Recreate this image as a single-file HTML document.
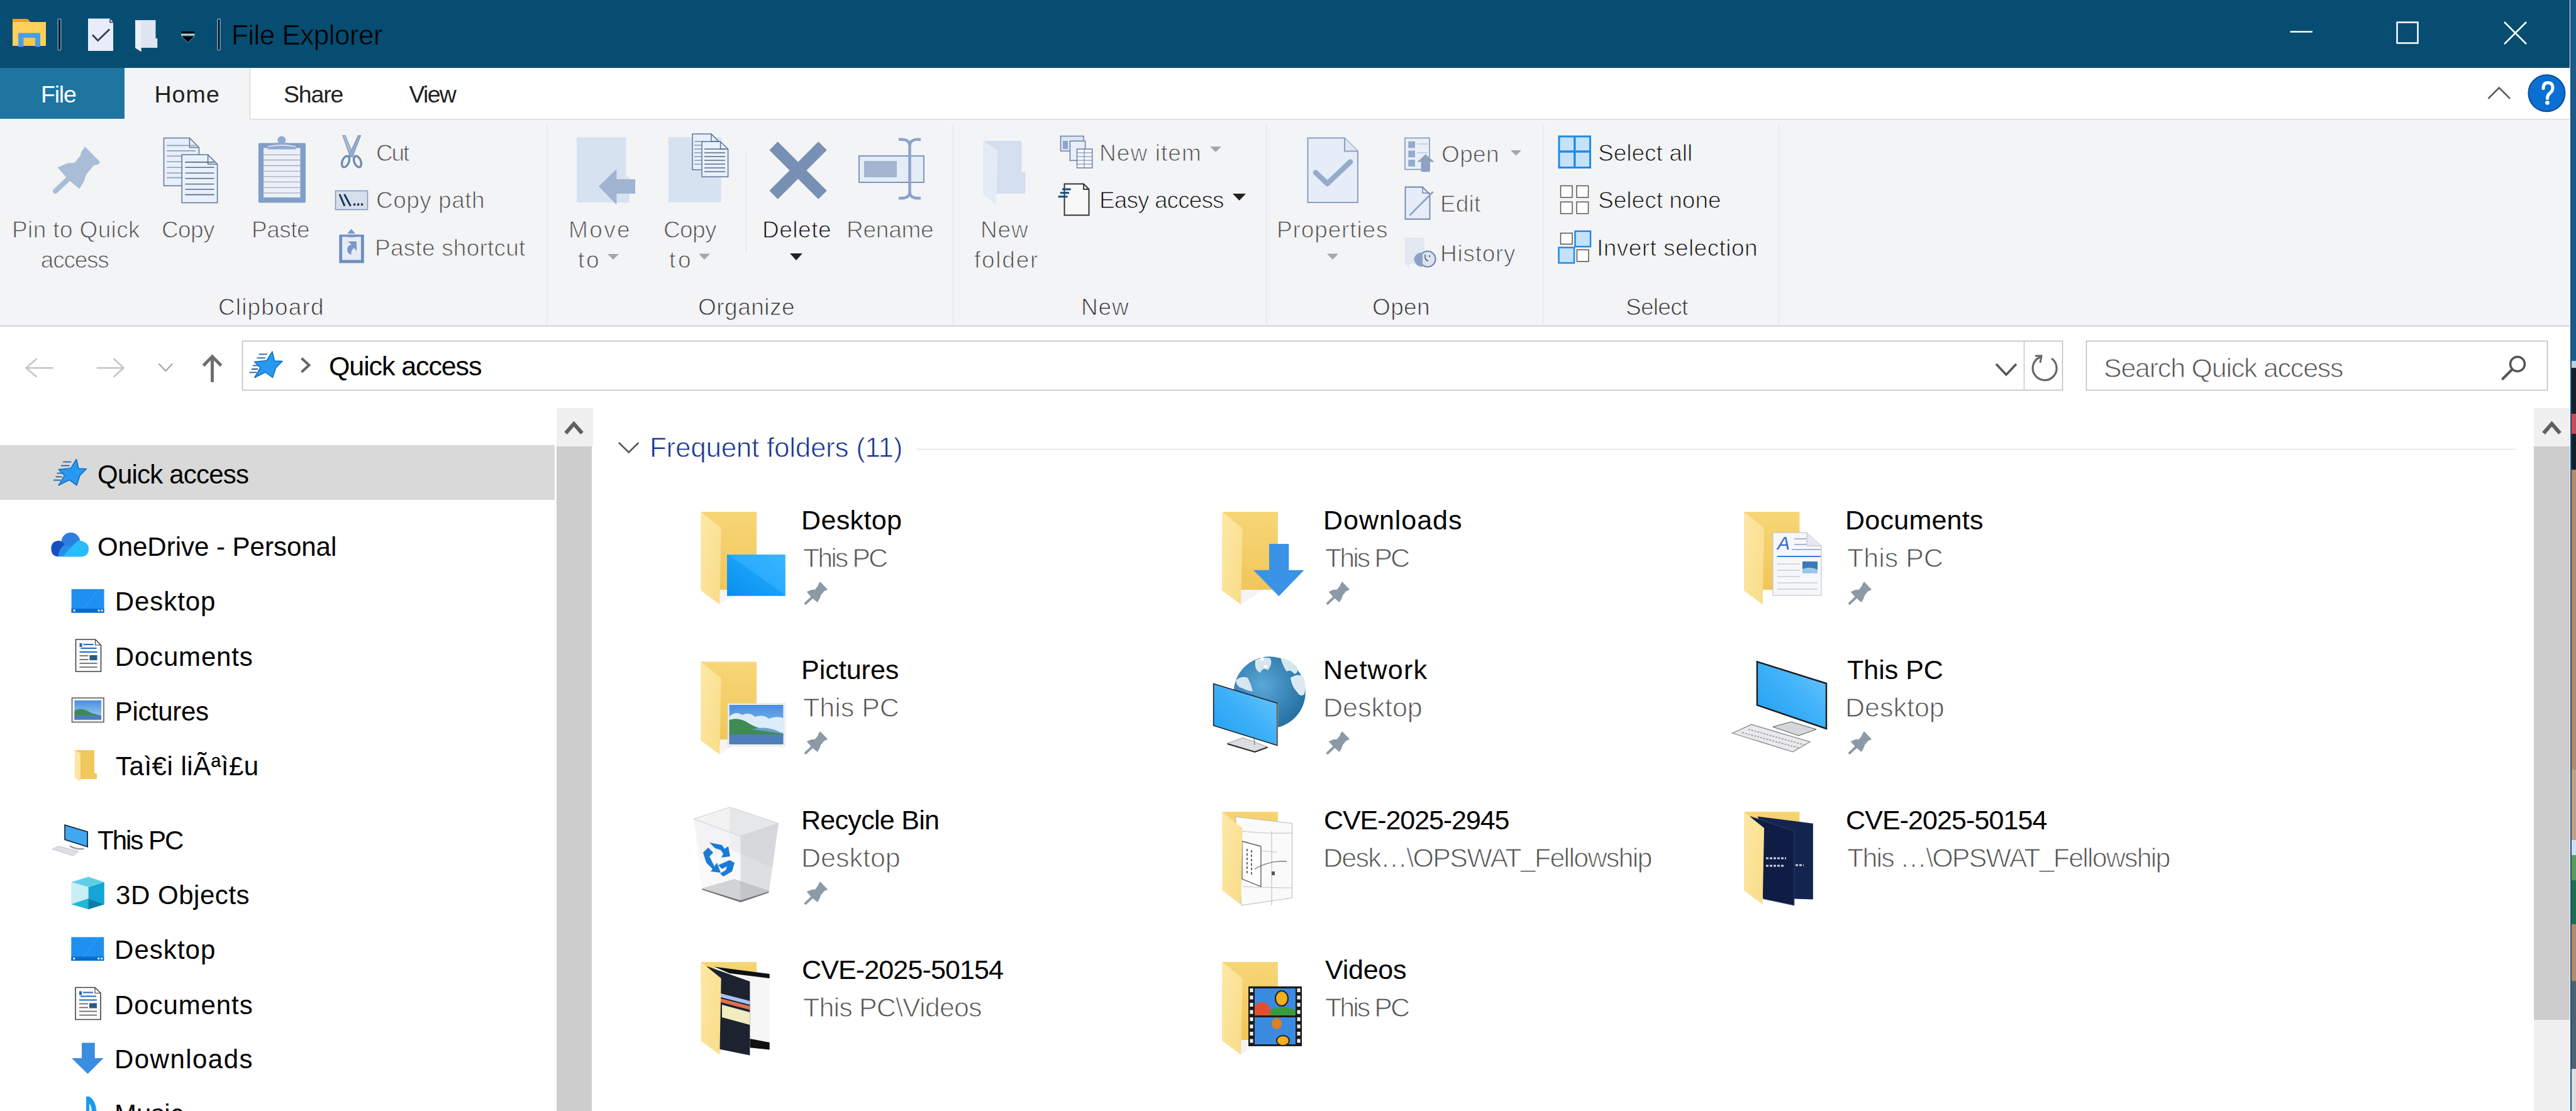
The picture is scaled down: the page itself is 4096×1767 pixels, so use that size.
<!DOCTYPE html>
<html><head><meta charset="utf-8"><title>File Explorer</title>
<style>html,body{margin:0;padding:0;width:4096px;height:1767px;overflow:hidden;background:#fff}text{font-family:"Liberation Sans",sans-serif}</style>
</head><body>
<svg width="4096" height="1767" viewBox="0 0 4096 1767" style="display:block;font-family:&quot;Liberation Sans&quot;, sans-serif"><rect x="0" y="0" width="4096" height="1767" fill="#ffffff" />
<rect x="4087" y="0" width="9" height="1767" fill="#1b2a3a" />
<rect x="4089" y="0" width="7" height="574" fill="#1a5a8c" />
<rect x="4089" y="574" width="7" height="11" fill="#c0d0e0" />
<rect x="4089" y="585" width="7" height="162" fill="#14202e" />
<rect x="4089" y="658" width="7" height="32" fill="#c84a55" />
<rect x="4089" y="747" width="7" height="477" fill="#b48c6a" />
<rect x="4089" y="1224" width="7" height="112" fill="#c0a283" />
<rect x="4089" y="1336" width="7" height="24" fill="#d0e0f0" />
<rect x="4089" y="1360" width="7" height="40" fill="#5a9a5a" />
<rect x="4089" y="1400" width="7" height="70" fill="#1f6e50" />
<rect x="4089" y="1470" width="7" height="90" fill="#b48c6a" />
<rect x="4089" y="1560" width="7" height="140" fill="#4f6072" />
<rect x="4089" y="1700" width="7" height="67" fill="#dcdcdc" />
<rect x="4087" y="0" width="2" height="1767" fill="#1a4f7e" />
<rect x="0" y="0" width="4086" height="108" fill="#064d71" />
<rect x="0" y="108" width="4086" height="82" fill="#ffffff" />
<rect x="0" y="108" width="198" height="81" fill="#1e75a0" />
<rect x="198" y="108" width="199" height="82" fill="#f3f4f6" />
<line x1="397.5" y1="108" x2="397.5" y2="190" stroke="#cfd0d2" stroke-width="1.2" />
<line x1="397" y1="189.5" x2="4086" y2="189.5" stroke="#cfd0d2" stroke-width="1.2" />
<rect x="0" y="190" width="4086" height="328" fill="#f3f4f6" />
<line x1="0" y1="518.5" x2="4086" y2="518.5" stroke="#c6c7c9" stroke-width="1.5" />
<line x1="869.5" y1="198" x2="869.5" y2="517" stroke="#dfe1e4" stroke-width="1" />
<line x1="1515.5" y1="198" x2="1515.5" y2="517" stroke="#dfe1e4" stroke-width="1" />
<line x1="2014" y1="198" x2="2014" y2="517" stroke="#dfe1e4" stroke-width="1" />
<line x1="2453.5" y1="198" x2="2453.5" y2="517" stroke="#dfe1e4" stroke-width="1" />
<line x1="2828.5" y1="198" x2="2828.5" y2="517" stroke="#dfe1e4" stroke-width="1" />
<line x1="1186.5" y1="242" x2="1186.5" y2="402" stroke="#dcdee2" stroke-width="1" />
<rect x="385.5" y="542.5" width="2894" height="78" fill="#ffffff" stroke="#bdbdbd" stroke-width="1.5"/>
<line x1="3218.5" y1="543" x2="3218.5" y2="621" stroke="#c8c8c8" stroke-width="1.5" />
<rect x="3317.5" y="542.5" width="733" height="78" fill="#ffffff" stroke="#bdbdbd" stroke-width="1.5"/>
<rect x="0" y="708" width="882" height="87" fill="#d9d9d9" />
<rect x="885" y="649" width="58" height="61" fill="#f0f0f0" />
<rect x="885" y="710" width="56" height="1057" fill="#cdcdcd" />
<rect x="4029" y="649" width="57" height="61" fill="#f0f0f0" />
<rect x="4029" y="710" width="57" height="912" fill="#cdcdcd" />
<rect x="4029" y="1622" width="57" height="145" fill="#f0f0f0" />
<line x1="1458" y1="714.5" x2="4000" y2="714.5" stroke="#e3e3e3" stroke-width="1.5" />
<text x="368.0" y="71.0" font-size="44" fill="#000000" letter-spacing="-0.53" stroke="#064d71" stroke-width="0.7" xml:space="preserve">File Explorer</text>
<text x="65.0" y="163.0" font-size="37.5" fill="#ffffff" letter-spacing="-1.19" xml:space="preserve">File</text>
<text x="245.4" y="163.0" font-size="37.5" fill="#222222" letter-spacing="1.14" xml:space="preserve">Home</text>
<text x="451.0" y="163.0" font-size="37.5" fill="#222222" letter-spacing="-1.15" xml:space="preserve">Share</text>
<text x="650.6" y="163.0" font-size="37.5" fill="#222222" letter-spacing="-1.81" xml:space="preserve">View</text>
<text x="19.0" y="378.0" font-size="37" fill="#4f4f4f" letter-spacing="0.37" stroke="#f3f4f6" stroke-width="1.0" xml:space="preserve">Pin to Quick</text>
<text x="64.8" y="426.0" font-size="37" fill="#4f4f4f" letter-spacing="-1.23" stroke="#f3f4f6" stroke-width="1.0" xml:space="preserve">access</text>
<text x="257.0" y="378.0" font-size="37" fill="#4f4f4f" letter-spacing="-0.63" stroke="#f3f4f6" stroke-width="1.0" xml:space="preserve">Copy</text>
<text x="400.0" y="378.0" font-size="37" fill="#4f4f4f" letter-spacing="-0.51" stroke="#f3f4f6" stroke-width="1.0" xml:space="preserve">Paste</text>
<text x="598.0" y="256.0" font-size="37" fill="#4f4f4f" letter-spacing="-2.15" stroke="#f3f4f6" stroke-width="1.0" xml:space="preserve">Cut</text>
<text x="598.0" y="331.0" font-size="37" fill="#4f4f4f" letter-spacing="0.49" stroke="#f3f4f6" stroke-width="1.0" xml:space="preserve">Copy path</text>
<text x="596.0" y="407.0" font-size="37" fill="#4f4f4f" letter-spacing="0.21" stroke="#f3f4f6" stroke-width="1.0" xml:space="preserve">Paste shortcut</text>
<text x="904.0" y="378.0" font-size="37" fill="#4f4f4f" letter-spacing="2.37" stroke="#f3f4f6" stroke-width="1.0" xml:space="preserve">Move</text>
<text x="919.0" y="426.0" font-size="37" fill="#4f4f4f" letter-spacing="2.72" stroke="#f3f4f6" stroke-width="1.0" xml:space="preserve">to</text>
<text x="1055.0" y="378.0" font-size="37" fill="#4f4f4f" letter-spacing="-0.63" stroke="#f3f4f6" stroke-width="1.0" xml:space="preserve">Copy</text>
<text x="1064.0" y="426.0" font-size="37" fill="#4f4f4f" letter-spacing="3.72" stroke="#f3f4f6" stroke-width="1.0" xml:space="preserve">to</text>
<text x="1212.0" y="378.0" font-size="37" fill="#111111" letter-spacing="0.52" stroke="#f3f4f6" stroke-width="1.0" xml:space="preserve">Delete</text>
<text x="1346.0" y="378.0" font-size="37" fill="#4f4f4f" letter-spacing="-0.25" stroke="#f3f4f6" stroke-width="1.0" xml:space="preserve">Rename</text>
<text x="1559.0" y="378.0" font-size="37" fill="#4f4f4f" letter-spacing="0.85" stroke="#f3f4f6" stroke-width="1.0" xml:space="preserve">New</text>
<text x="1549.0" y="426.0" font-size="37" fill="#4f4f4f" letter-spacing="1.75" stroke="#f3f4f6" stroke-width="1.0" xml:space="preserve">folder</text>
<text x="1748.0" y="256.0" font-size="37" fill="#4f4f4f" letter-spacing="1.09" stroke="#f3f4f6" stroke-width="1.0" xml:space="preserve">New item</text>
<text x="1748.0" y="331.0" font-size="37" fill="#111111" letter-spacing="-0.92" stroke="#f3f4f6" stroke-width="1.0" xml:space="preserve">Easy access</text>
<text x="2030.0" y="378.0" font-size="37" fill="#4f4f4f" letter-spacing="0.87" stroke="#f3f4f6" stroke-width="1.0" xml:space="preserve">Properties</text>
<text x="2292.0" y="258.0" font-size="37" fill="#4f4f4f" letter-spacing="0.35" stroke="#f3f4f6" stroke-width="1.0" xml:space="preserve">Open</text>
<text x="2290.0" y="337.0" font-size="37" fill="#4f4f4f" letter-spacing="0.17" stroke="#f3f4f6" stroke-width="1.0" xml:space="preserve">Edit</text>
<text x="2290.0" y="416.0" font-size="37" fill="#4f4f4f" letter-spacing="0.73" stroke="#f3f4f6" stroke-width="1.0" xml:space="preserve">History</text>
<text x="2541.0" y="256.0" font-size="37" fill="#111111" letter-spacing="0.01" stroke="#f3f4f6" stroke-width="1.0" xml:space="preserve">Select all</text>
<text x="2541.0" y="331.0" font-size="37" fill="#111111" letter-spacing="0.02" stroke="#f3f4f6" stroke-width="1.0" xml:space="preserve">Select none</text>
<text x="2539.0" y="407.0" font-size="37" fill="#111111" letter-spacing="0.45" stroke="#f3f4f6" stroke-width="1.0" xml:space="preserve">Invert selection</text>
<text x="347.0" y="501.0" font-size="37" fill="#333333" letter-spacing="1.15" stroke="#f3f4f6" stroke-width="1.0" xml:space="preserve">Clipboard</text>
<text x="1110.0" y="501.0" font-size="37" fill="#333333" letter-spacing="0.49" stroke="#f3f4f6" stroke-width="1.0" xml:space="preserve">Organize</text>
<text x="1719.0" y="501.0" font-size="37" fill="#333333" letter-spacing="0.85" stroke="#f3f4f6" stroke-width="1.0" xml:space="preserve">New</text>
<text x="2182.0" y="501.0" font-size="37" fill="#333333" letter-spacing="0.35" stroke="#f3f4f6" stroke-width="1.0" xml:space="preserve">Open</text>
<text x="2585.0" y="501.0" font-size="37" fill="#333333" letter-spacing="-0.71" stroke="#f3f4f6" stroke-width="1.0" xml:space="preserve">Select</text>
<text x="523.0" y="597.0" font-size="43" fill="#000000" letter-spacing="-1.11" xml:space="preserve">Quick access</text>
<text x="3345.0" y="600.0" font-size="43" fill="#555555" letter-spacing="-1.24" stroke="#ffffff" stroke-width="1.0" xml:space="preserve">Search Quick access</text>
<text x="155.0" y="769.0" font-size="42" fill="#000000" letter-spacing="-0.79" xml:space="preserve">Quick access</text>
<text x="155.0" y="884.0" font-size="42" fill="#000000" letter-spacing="-0.01" xml:space="preserve">OneDrive - Personal</text>
<text x="182.8" y="971.0" font-size="42" fill="#000000" letter-spacing="0.91" xml:space="preserve">Desktop</text>
<text x="182.8" y="1058.8" font-size="42" fill="#000000" letter-spacing="0.81" xml:space="preserve">Documents</text>
<text x="182.8" y="1146.3" font-size="42" fill="#000000" letter-spacing="-0.36" xml:space="preserve">Pictures</text>
<text x="184.0" y="1233.0" font-size="42" fill="#000000" letter-spacing="0.51" xml:space="preserve">Taì€i liÃªì£u</text>
<text x="155.0" y="1350.5" font-size="42" fill="#000000" letter-spacing="-2.00" xml:space="preserve">This PC</text>
<text x="184.0" y="1438.0" font-size="42" fill="#000000" letter-spacing="0.54" xml:space="preserve">3D Objects</text>
<text x="182.0" y="1525.0" font-size="42" fill="#000000" letter-spacing="1.05" xml:space="preserve">Desktop</text>
<text x="182.0" y="1612.5" font-size="42" fill="#000000" letter-spacing="0.91" xml:space="preserve">Documents</text>
<text x="182.0" y="1699.0" font-size="42" fill="#000000" letter-spacing="1.46" xml:space="preserve">Downloads</text>
<text x="182.0" y="1786.0" font-size="42" fill="#000000" letter-spacing="0.00" xml:space="preserve">Music</text>
<text x="1033.0" y="727.4" font-size="44" fill="#1a3590" letter-spacing="-0.26" stroke="#ffffff" stroke-width="0.8" xml:space="preserve">Frequent folders (11)</text>
<text x="1274.0" y="841.5" font-size="43" fill="#000000" letter-spacing="0.36" xml:space="preserve">Desktop</text>
<text x="1277.0" y="901.5" font-size="43" fill="#555555" letter-spacing="-2.98" stroke="#ffffff" stroke-width="1.0" xml:space="preserve">This PC</text>
<text x="2104.0" y="841.5" font-size="43" fill="#000000" letter-spacing="0.97" xml:space="preserve">Downloads</text>
<text x="2107.0" y="901.5" font-size="43" fill="#555555" letter-spacing="-2.98" stroke="#ffffff" stroke-width="1.0" xml:space="preserve">This PC</text>
<text x="2934.0" y="841.5" font-size="43" fill="#000000" letter-spacing="0.25" xml:space="preserve">Documents</text>
<text x="2937.0" y="901.5" font-size="43" fill="#555555" letter-spacing="0.00" stroke="#ffffff" stroke-width="1.0" xml:space="preserve">This PC</text>
<text x="1274.0" y="1079.5" font-size="43" fill="#000000" letter-spacing="0.00" xml:space="preserve">Pictures</text>
<text x="1277.0" y="1139.5" font-size="43" fill="#555555" letter-spacing="0.00" stroke="#ffffff" stroke-width="1.0" xml:space="preserve">This PC</text>
<text x="2104.0" y="1079.5" font-size="43" fill="#000000" letter-spacing="1.22" xml:space="preserve">Network</text>
<text x="2104.0" y="1139.5" font-size="43" fill="#555555" letter-spacing="0.00" stroke="#ffffff" stroke-width="1.0" xml:space="preserve">Desktop</text>
<text x="2937.0" y="1079.5" font-size="43" fill="#000000" letter-spacing="0.00" xml:space="preserve">This PC</text>
<text x="2934.0" y="1139.5" font-size="43" fill="#555555" letter-spacing="0.00" stroke="#ffffff" stroke-width="1.0" xml:space="preserve">Desktop</text>
<text x="1274.0" y="1318.5" font-size="43" fill="#000000" letter-spacing="-0.71" xml:space="preserve">Recycle Bin</text>
<text x="1274.0" y="1378.5" font-size="43" fill="#555555" letter-spacing="0.00" stroke="#ffffff" stroke-width="1.0" xml:space="preserve">Desktop</text>
<text x="2105.0" y="1318.5" font-size="43" fill="#000000" letter-spacing="-1.07" xml:space="preserve">CVE-2025-2945</text>
<text x="2104.0" y="1378.5" font-size="43" fill="#555555" letter-spacing="-1.73" stroke="#ffffff" stroke-width="1.0" xml:space="preserve">Desk…\OPSWAT_Fellowship</text>
<text x="2935.0" y="1318.5" font-size="43" fill="#000000" letter-spacing="-0.91" xml:space="preserve">CVE-2025-50154</text>
<text x="2937.0" y="1378.5" font-size="43" fill="#555555" letter-spacing="-1.84" stroke="#ffffff" stroke-width="1.0" xml:space="preserve">This …\OPSWAT_Fellowship</text>
<text x="1275.0" y="1556.5" font-size="43" fill="#000000" letter-spacing="-0.87" xml:space="preserve">CVE-2025-50154</text>
<text x="1277.0" y="1616.5" font-size="43" fill="#555555" letter-spacing="-0.85" stroke="#ffffff" stroke-width="1.0" xml:space="preserve">This PC\Videos</text>
<text x="2107.0" y="1556.5" font-size="43" fill="#000000" letter-spacing="-0.24" xml:space="preserve">Videos</text>
<text x="2107.0" y="1616.5" font-size="43" fill="#555555" letter-spacing="-2.98" stroke="#ffffff" stroke-width="1.0" xml:space="preserve">This PC</text>
<g>
<path d="M20,30 h22 q3,0 4,2 l2,3 h25 v38 h-53 z" fill="#eda411"/>
<rect x="20" y="35" width="53" height="38" fill="#ffd05c"/>
<path d="M29,52.5 h35 v22 h-8.5 v-14 h-18 v14 h-8.5 z" fill="#4a9fe4"/>
<rect x="38" y="60.5" width="18" height="12.5" fill="#fec84a"/>
</g>
<rect x="91.5" y="29.5" width="6" height="51" rx="2" fill="#7aa4bc"/><rect x="93.0" y="31" width="3" height="48" fill="#06122a"/>
<rect x="345" y="29.5" width="6" height="51" rx="2" fill="#7aa4bc"/><rect x="346.5" y="31" width="3" height="48" fill="#06122a"/>
<path d="M140,29.5 h35 l5,6 v45.5 h-40 z" fill="#e9edf9"/>
<path d="M175,30 v5.5 h5" fill="none" stroke="#2a3650" stroke-width="1.5"/>
<polyline points="147,55.5 155.7,64.5 174.2,46.5" fill="none" stroke="#34425a" stroke-width="3"/>
<path d="M215,32 h32.5 v29 h2.8 v15 h-26 v6.3 l-9.3,-6.3 z" fill="#dfe5f1"/>
<path d="M215,32 l9.5,4 v46.2 l-9.5,-6.3 z" fill="#eef1f8"/>
<rect x="288" y="50" width="21.5" height="3.5" fill="#000"/>
<rect x="288" y="53.5" width="21.5" height="3" fill="#9fd0e8"/>
<path d="M288,57 h21.5 l-10.75,11 z" fill="#000" stroke="#7aa4bc" stroke-width="1"/>
<line x1="3641.5" y1="50.5" x2="3677" y2="50.5" stroke="#fff" stroke-width="2.5"/>
<rect x="3811.5" y="35.5" width="33" height="33" fill="none" stroke="#fff" stroke-width="2.5"/>
<path d="M3982,35 L4017,70 M4017,35 L3982,70" stroke="#fff" stroke-width="2.5"/>
<polyline points="3956.4,156.8 3973.7,139.5 3991,156.8" fill="none" stroke="#555" stroke-width="2.5"/>
<circle cx="4049.4" cy="148.2" r="29" fill="#0a6fd2" stroke="#0b4f95" stroke-width="2"/>
<path d="M4044,140.5 Q4044,131.5 4051.5,131.5 Q4059,131.5 4059,139.5 Q4059,145 4054,148.5 Q4050.5,151.5 4050.5,156.5" fill="none" stroke="#fff" stroke-width="5" stroke-linecap="round"/><circle cx="4050.5" cy="163.5" r="3.3" fill="#fff"/>
<path d="M135,233.1 L159.4,257.9 L156.6,261.2 L148.7,263.5 L137.5,277 L133.6,288.2 L126.3,300.6 L112.2,288.8 L104.9,281.5 L91.4,266.3 L107.1,259.6 L118.4,259 L128.5,246.6 L128.5,243.2 Z" fill="#aabdd6"/>
<line x1="108" y1="285" x2="88" y2="304" stroke="#aabdd6" stroke-width="8" stroke-linecap="round"/>
<path d="M260.5,219.5 H301.4 L316.4,234.5 V295.6 H260.5 Z" fill="#e6effb" stroke="#5f7494" stroke-width="1.5"/><path d="M301.4,219.5 V234.5 H316.4" fill="none" stroke="#5f7494" stroke-width="1.5"/><line x1="265.2" y1="231.4" x2="311" y2="231.4" stroke="#8f9db2" stroke-width="1.6"/><line x1="265.2" y1="239.9" x2="311" y2="239.9" stroke="#8f9db2" stroke-width="1.6"/><line x1="265.2" y1="248.3" x2="311" y2="248.3" stroke="#8f9db2" stroke-width="1.6"/><line x1="265.2" y1="257.3" x2="311" y2="257.3" stroke="#8f9db2" stroke-width="1.6"/><line x1="265.2" y1="266.3" x2="311" y2="266.3" stroke="#8f9db2" stroke-width="1.6"/><line x1="265.2" y1="275.3" x2="311" y2="275.3" stroke="#8f9db2" stroke-width="1.6"/><line x1="265.2" y1="282.6" x2="311" y2="282.6" stroke="#8f9db2" stroke-width="1.6"/>
<path d="M289.2,246.1 H330.6 L345.6,261.1 V322.6 H289.2 Z" fill="#e8f0fb" stroke="#5f7494" stroke-width="1.5"/><path d="M330.6,246.1 V261.1 H345.6" fill="none" stroke="#5f7494" stroke-width="1.5"/><line x1="294.4" y1="257.9" x2="340.6" y2="257.9" stroke="#5a6a85" stroke-width="1.6"/><line x1="294.4" y1="266.3" x2="340.6" y2="266.3" stroke="#5a6a85" stroke-width="1.6"/><line x1="294.4" y1="275.3" x2="340.6" y2="275.3" stroke="#5a6a85" stroke-width="1.6"/><line x1="294.4" y1="283.7" x2="340.6" y2="283.7" stroke="#5a6a85" stroke-width="1.6"/><line x1="294.4" y1="292.7" x2="340.6" y2="292.7" stroke="#5a6a85" stroke-width="1.6"/><line x1="294.4" y1="301.2" x2="340.6" y2="301.2" stroke="#5a6a85" stroke-width="1.6"/><line x1="294.4" y1="309.6" x2="340.6" y2="309.6" stroke="#5a6a85" stroke-width="1.6"/>
<rect x="410.9" y="227.5" width="75.1" height="95" rx="2" fill="#819ec6"/>
<rect x="419.1" y="235.4" width="58.3" height="78.7" fill="#eaeff8"/>
<line x1="419.1" y1="246.4" x2="477.4" y2="246.4" stroke="#a7adb9" stroke-width="1.3"/>
<line x1="419.1" y1="254.5" x2="477.4" y2="254.5" stroke="#a7adb9" stroke-width="1.3"/>
<line x1="419.1" y1="263.5" x2="477.4" y2="263.5" stroke="#a7adb9" stroke-width="1.3"/>
<line x1="419.1" y1="272.3" x2="477.4" y2="272.3" stroke="#a7adb9" stroke-width="1.3"/>
<line x1="419.1" y1="280.9" x2="477.4" y2="280.9" stroke="#a7adb9" stroke-width="1.3"/>
<line x1="419.1" y1="289.4" x2="477.4" y2="289.4" stroke="#a7adb9" stroke-width="1.3"/>
<line x1="419.1" y1="298.4" x2="477.4" y2="298.4" stroke="#a7adb9" stroke-width="1.3"/>
<line x1="419.1" y1="306.8" x2="477.4" y2="306.8" stroke="#a7adb9" stroke-width="1.3"/>
<circle cx="447.8" cy="223" r="6.5" fill="#8eaad4"/>
<path d="M438,226.9 H458.5 L472,237.6 H424.2 Z" fill="#8eaad4"/>
<path d="M426,233 Q448,229 470,233" stroke="#e8eef8" stroke-width="1.5" fill="none"/>
<path d="M545,215.5 L549,215.5 L562,247 L557,250 Z" fill="#a9bdd8" stroke="#7f98bd" stroke-width="1.2"/>
<path d="M573.5,215.5 L569.5,215.5 L555,247 L560,250 Z" fill="#95acd0" stroke="#7f98bd" stroke-width="1.2"/>
<g fill="none" stroke="#6f8ab0" stroke-width="3.4">
<ellipse cx="549.5" cy="257" rx="5.2" ry="9.3" transform="rotate(22 549.5 257)"/>
<ellipse cx="568.5" cy="257" rx="5.2" ry="9.3" transform="rotate(-22 568.5 257)"/>
</g>
<rect x="533.5" y="303.5" width="51" height="30" fill="#d6deeb" stroke="#8297ba" stroke-width="1.5"/>
<path d="M540,309 L548,327.7 M547.5,309 L557.5,327.7" stroke="#1e3555" stroke-width="3"/>
<rect x="562" y="323.5" width="3.2" height="3.5" fill="#1e3555"/><rect x="568" y="323.5" width="3.2" height="3.5" fill="#1e3555"/><rect x="574" y="323.5" width="3.2" height="3.5" fill="#1e3555"/>
<rect x="539.3" y="373.1" width="39.5" height="45.3" fill="#6d8ec2"/>
<rect x="544" y="376.5" width="30" height="37" fill="#e6ebf5"/>
<path d="M552.2,371.6 L558.6,364 L565,371.6 Z" fill="#7a98c8"/>
<path d="M546,374 Q559,379 572,374" stroke="#7a98c8" stroke-width="2" fill="none"/>
<path d="M553,384 H567 V400 L563,394 Q557,400 559,405 Q552,404 552,396 Q553,390 559,389 L553,384 Z" fill="#7a98c8"/>
<path d="M917,218.2 H995.4 V280.8 H1000.8 V322.1 H917 Z" fill="#d7e2f1"/>
<path d="M952,296.6 L980.4,268.7 V285 H1010 V308.1 H980.4 V325.8 Z" fill="#a0b4d1"/>
<path d="M1062.8,218.2 H1146.7 V322.1 H1062.8 Z" fill="#d7e2f1"/>
<path d="M1101,213.1 H1131 L1143,225.1 V269.9 H1101 Z" fill="#e6effb" stroke="#5f7494" stroke-width="1.5"/><path d="M1131,213.1 V225.1 H1143" fill="none" stroke="#5f7494" stroke-width="1.5"/><line x1="1104" y1="225" x2="1118" y2="225" stroke="#8f9db2" stroke-width="1.6"/><line x1="1104" y1="231" x2="1118" y2="231" stroke="#8f9db2" stroke-width="1.6"/><line x1="1104" y1="237" x2="1118" y2="237" stroke="#8f9db2" stroke-width="1.6"/><line x1="1104" y1="243" x2="1118" y2="243" stroke="#8f9db2" stroke-width="1.6"/><line x1="1104" y1="249" x2="1118" y2="249" stroke="#8f9db2" stroke-width="1.6"/><line x1="1104" y1="255" x2="1118" y2="255" stroke="#8f9db2" stroke-width="1.6"/><line x1="1104" y1="261" x2="1118" y2="261" stroke="#8f9db2" stroke-width="1.6"/>
<path d="M1116,225.3 H1145.6 L1157.6,237.3 V281.2 H1116 Z" fill="#e8f0fb" stroke="#5f7494" stroke-width="1.5"/><path d="M1145.6,225.3 V237.3 H1157.6" fill="none" stroke="#5f7494" stroke-width="1.5"/><line x1="1120" y1="237" x2="1153" y2="237" stroke="#5a6a85" stroke-width="1.6"/><line x1="1120" y1="243" x2="1153" y2="243" stroke="#5a6a85" stroke-width="1.6"/><line x1="1120" y1="249" x2="1153" y2="249" stroke="#5a6a85" stroke-width="1.6"/><line x1="1120" y1="255" x2="1153" y2="255" stroke="#5a6a85" stroke-width="1.6"/><line x1="1120" y1="261" x2="1153" y2="261" stroke="#5a6a85" stroke-width="1.6"/><line x1="1120" y1="267" x2="1153" y2="267" stroke="#5a6a85" stroke-width="1.6"/><line x1="1120" y1="273" x2="1153" y2="273" stroke="#5a6a85" stroke-width="1.6"/>
<path d="M1230,232 L1308,310 M1308,232 L1230,310" stroke="#7890b4" stroke-width="19" stroke-linecap="butt"/>
<rect x="1366" y="248" width="103" height="42" fill="#e4ecf8" stroke="#7d96bc" stroke-width="2"/>
<rect x="1374" y="256" width="52" height="26" fill="#a3b5d0"/>
<path d="M1446.5,228 V309 M1429,222 Q1446,220 1446.5,232 Q1447,220 1464,222 M1429,315 Q1446,317 1446.5,305 Q1447,317 1464,315" stroke="#8aa3c8" stroke-width="4.5" fill="none"/>
<path d="M1563.7,223.9 H1624.4 V273.5 H1630.3 V308.1 H1584 V325 L1563.7,309.4 Z" fill="#d3deee"/>
<path d="M1563.7,223.9 L1586.6,239.6 L1584,325 L1563.7,309.4 Z" fill="#e3ebf7"/>
<rect x="1686.5" y="216.5" width="36.5" height="23.7" fill="#dde6f5" stroke="#6880a8" stroke-width="1.5"/>
<rect x="1690" y="224" width="8" height="13" fill="#8ea4c8"/>
<rect x="1701.4" y="224.3" width="24.2" height="31" fill="#e8eef9" stroke="#6880a8" stroke-width="1.5"/>
<rect x="1712.5" y="237" width="24.2" height="30" fill="#f4f7fc" stroke="#6880a8" stroke-width="1.5"/>
<path d="M1712.5,243 H1736.7 M1712.5,249 H1736.7 M1712.5,255 H1736.7 M1712.5,261 H1736.7 M1724,237 V267" stroke="#6880a8" stroke-width="1"/>
<path d="M1692.5,292.5 H1723 L1731.5,301 V342.3 H1692.5 Z" fill="#f8f8f8" stroke="#333" stroke-width="2"/>
<path d="M1723,292.5 V301 H1731.5" fill="none" stroke="#333" stroke-width="1.8"/>
<path d="M1689,301 H1702.7 M1685.8,306.8 H1700 M1682.5,312.7 H1697.5" stroke="#1a4a80" stroke-width="3"/>
<path d="M2079.5,219.5 H2138 L2159,240.5 V322 H2079.5 Z" fill="#e6edf8" stroke="#8aa0c4" stroke-width="2"/>
<path d="M2138,219.5 V240.5 H2159" fill="#dfe7f4" stroke="#8aa0c4" stroke-width="2"/>
<polyline points="2092,274.5 2110.5,292 2147,257.5" fill="none" stroke="#95abcc" stroke-width="8.5" stroke-linecap="round" stroke-linejoin="round"/>
<rect x="2234" y="219.5" width="39" height="50" fill="#eaeff8" stroke="#7a90b5" stroke-width="1.5"/>
<rect x="2239.2" y="224.7" width="10.8" height="10.8" fill="#94abcd"/><rect x="2239.2" y="239.5" width="10.8" height="10.8" fill="#94abcd"/><rect x="2239.2" y="254" width="10.8" height="10.8" fill="#94abcd"/>
<path d="M2253,229 H2270 M2253,243 H2270" stroke="#a8b4c8" stroke-width="1"/>
<path d="M2253.4,257.6 L2266.6,245.4 L2280.7,257.6 H2273.6 V273.2 H2259.5 V257.6 Z" fill="#8da2c2"/>
<path d="M2234.5,297.5 H2262 L2273.5,309 V348.5 H2234.5 Z" fill="#e6edf8" stroke="#6f87b0" stroke-width="1.8"/>
<line x1="2241.3" y1="342.6" x2="2278.7" y2="305" stroke="#8aa0c0" stroke-width="2.5"/>
<path d="M2262,297.5 V307 H2273.5" fill="none" stroke="#6f87b0" stroke-width="1.5"/>
<path d="M2233.5,378 H2265 V420 H2241 V426 L2233.5,420 Z" fill="#e2e8f2"/>
<circle cx="2270" cy="412" r="12.5" fill="#dde4ef" stroke="#6f87b0" stroke-width="2.2"/>
<path d="M2248,412 Q2252,400 2262,402 L2262,424 Q2252,426 2248,412 Z" fill="#8da2c2"/>
<path d="M2266,405 Q2265,414 2271,415 M2273,406 V409" stroke="#4a5a78" stroke-width="1.6" fill="none"/>
<rect x="2479" y="217" width="49.5" height="49.5" fill="#c5e2fb" stroke="#1f8be6" stroke-width="3"/>
<path d="M2503.8,217 V266.5 M2479,240.9 H2528.5" stroke="#1f8be6" stroke-width="3.5"/>
<rect x="2481.5" y="295.5" width="18.5" height="18.5" fill="#fff" stroke="#555" stroke-width="1.5"/>
<rect x="2507" y="295.5" width="18.5" height="18.5" fill="#fff" stroke="#555" stroke-width="1.5"/>
<rect x="2481.5" y="321.2" width="18.5" height="18.5" fill="#fff" stroke="#555" stroke-width="1.5"/>
<rect x="2507" y="321.2" width="18.5" height="18.5" fill="#fff" stroke="#555" stroke-width="1.5"/>
<rect x="2481.5" y="370.8" width="18.5" height="17.5" fill="#fff" stroke="#555" stroke-width="1.5"/>
<rect x="2504.5" y="367.7" width="24.5" height="24.5" fill="#c5e2fb" stroke="#1f8be6" stroke-width="2.5"/>
<rect x="2478.5" y="393.7" width="24.5" height="24.5" fill="#c5e2fb" stroke="#1f8be6" stroke-width="2.5"/>
<rect x="2507.5" y="397.3" width="18.5" height="18.5" fill="#fff" stroke="#555" stroke-width="1.5"/>
<path d="M966,404 H984 L975.0,413 Z" fill="#a6a6a6"/>
<path d="M1111,403.5 H1129 L1120.0,413 Z" fill="#a6a6a6"/>
<path d="M1256,403 H1276 L1266.0,414 Z" fill="#222"/>
<path d="M1924,233 H1942 L1933.0,242 Z" fill="#a6a6a6"/>
<path d="M1960,308 H1981 L1970.5,319 Z" fill="#222"/>
<path d="M2110,403.5 H2128 L2119.0,413 Z" fill="#a6a6a6"/>
<path d="M2402,239 H2419 L2410.5,247.5 Z" fill="#a6a6a6"/>
<defs>
<linearGradient id="fback" x1="0" y1="0" x2="0" y2="1"><stop offset="0" stop-color="#f7d677"/><stop offset="1" stop-color="#f0c65a"/></linearGradient>
<linearGradient id="fflap" x1="0" y1="0" x2="1" y2="1"><stop offset="0" stop-color="#fde8a6"/><stop offset="1" stop-color="#f8dc88"/></linearGradient>
<linearGradient id="blue1" x1="0" y1="1" x2="1" y2="0"><stop offset="0" stop-color="#0a8ef0"/><stop offset="0.5" stop-color="#18a0f8"/><stop offset="0.52" stop-color="#2aacff"/><stop offset="1" stop-color="#3ab4ff"/></linearGradient>
<linearGradient id="scr" x1="0" y1="1" x2="1" y2="0"><stop offset="0" stop-color="#1ea0f0"/><stop offset="0.5" stop-color="#3cb0f8"/><stop offset="1" stop-color="#6cc8ff"/></linearGradient>
<radialGradient id="globe" cx="0.4" cy="0.4" r="0.7"><stop offset="0" stop-color="#5aa8d8"/><stop offset="1" stop-color="#1f6a9a"/></radialGradient>
<linearGradient id="cloud" x1="0" y1="0" x2="1" y2="0"><stop offset="0" stop-color="#1656cc"/><stop offset="0.45" stop-color="#2a8ae8"/><stop offset="1" stop-color="#2cc4fa"/></linearGradient>
<linearGradient id="sky" x1="0" y1="0" x2="0" y2="1"><stop offset="0" stop-color="#4a8ee0"/><stop offset="1" stop-color="#a8d0f0"/></linearGradient>
</defs>
<g fill="none" stroke-linecap="round">
<path d="M41.5,585.2 H83.8 M41.5,585.2 L57.7,571 M41.5,585.2 L57.7,599" stroke="#c4c4c4" stroke-width="2.5"/>
<path d="M154.7,585.2 H196.6 M196.6,585.2 L181.2,571 M196.6,585.2 L181.2,599" stroke="#c4c4c4" stroke-width="2.5"/>
<polyline points="252.8,578.8 263.4,590.2 273.7,578.8" stroke="#9a9a9a" stroke-width="1.8"/>
<path d="M337.5,567 V607.8" stroke="#6e6e6e" stroke-width="5" stroke-linecap="butt"/>
<polyline points="323.5,581.5 337.5,567 351.7,581.5" stroke="#6e6e6e" stroke-width="5" stroke-linecap="butt"/>
<polyline points="479.5,569.8 491.5,580.8 479.5,591.8" stroke="#666" stroke-width="4" stroke-linecap="butt"/>
<polyline points="3174,579 3190,596 3206,579" stroke="#555" stroke-width="3.5" stroke-linecap="butt"/>
<path d="M3244,568 A19,19 0 1 0 3262,570" stroke="#666" stroke-width="3.2" stroke-linecap="butt"/>
<polyline points="3236,566 3246,566 3244,577" stroke="#666" stroke-width="3" stroke-linecap="butt"/>
<circle cx="4003" cy="579" r="11.5" stroke="#555" stroke-width="3.5"/>
<line x1="3994.5" y1="587.5" x2="3979.5" y2="602.5" stroke="#555" stroke-width="4"/>
<polyline points="984,704 999.7,719.5 1015.4,704" stroke="#555" stroke-width="2.5" stroke-linecap="butt"/>
</g>
<polyline points="899.5,689 912.5,674 925.5,689" fill="none" stroke="#606060" stroke-width="6"/>
<polyline points="4044.5,689 4057.5,674 4070.5,689" fill="none" stroke="#606060" stroke-width="6"/>
<g transform="translate(0,0)">
<path d="M411.7,563.3 H424.8 M408.5,569.3 H422 M402,581.3 H410 M400,587 H410 M396.5,592.4 H408" stroke="#2a5a98" stroke-width="1.8"/>
<path d="M433,559.2 L436.5,574 L449,574.5 L438.5,585 L433.5,600.5 L422,592 L404.7,600.5 L414,585 L404.7,575.5 L424,573.5 Z" fill="#2898f0" stroke="#0b6cc4" stroke-width="1.5" stroke-linejoin="round"/>
</g>
<g transform="translate(-311.5,171.3)">
<path d="M411.7,563.3 H424.8 M408.5,569.3 H422 M402,581.3 H410 M400,587 H410 M396.5,592.4 H408" stroke="#2a5a98" stroke-width="1.8"/>
<path d="M433,559.2 L436.5,574 L449,574.5 L438.5,585 L433.5,600.5 L422,592 L404.7,600.5 L414,585 L404.7,575.5 L424,573.5 Z" fill="#2898f0" stroke="#0b6cc4" stroke-width="1.5" stroke-linejoin="round"/>
</g>
<g>
<circle cx="112.5" cy="862" r="15" fill="#2a7fe0"/>
<circle cx="92" cy="871" r="10.5" fill="#1656cc"/>
<circle cx="130" cy="872.5" r="11" fill="#2bb6f4"/>
<rect x="92" y="868" width="38" height="17.3" fill="#2a8ee8"/>
<path d="M100,885.3 Q112,870 124,860 Q134,858 141,872 Q141,885 130,885.3 Z" fill="#28bdf6"/>
<path d="M81.5,872 Q82,860 94,860 Q100,861 103,866 Q94,872 92,885.3 Q81,884 81.5,872 Z" fill="#1450c4"/>
</g>
<rect x="113.6" y="937" width="52" height="37.5" fill="#1e90f0"/><path d="M127.6,974.5 L157.6,937" stroke="#4ab0ff" stroke-width="1" opacity="0.6"/><rect x="113.6" y="968" width="52" height="6.5" fill="#0a6cc8"/><rect x="116.6" y="969.5" width="3" height="3" fill="#e0f0ff"/><rect x="155.6" y="969.5" width="3" height="3" fill="#e0f0ff"/><rect x="160.6" y="969.5" width="3" height="3" fill="#e0f0ff"/>
<rect x="113.3" y="1490.5" width="52" height="37.5" fill="#1e90f0"/><path d="M127.3,1528.0 L157.3,1490.5" stroke="#4ab0ff" stroke-width="1" opacity="0.6"/><rect x="113.3" y="1521.5" width="52" height="6.5" fill="#0a6cc8"/><rect x="116.3" y="1523.0" width="3" height="3" fill="#e0f0ff"/><rect x="155.3" y="1523.0" width="3" height="3" fill="#e0f0ff"/><rect x="160.3" y="1523.0" width="3" height="3" fill="#e0f0ff"/>
<path d="M120.5,1017 H151.5 L160.5,1026 V1068 H120.5 Z" fill="#fafafa" stroke="#444" stroke-width="1.6"/><path d="M151.5,1017 V1026 H160.5" fill="none" stroke="#444" stroke-width="1.2"/><path d="M132.5,1025 H148.5 M128.5,1031 H153.5 M126.5,1037 H154.5" stroke="#1e6ac8" stroke-width="2.2"/><rect x="126.5" y="1023" width="4" height="6" fill="#1e6ac8"/><path d="M126.5,1043 H140.5 M126.5,1049 H140.5 M126.5,1055 H154.5 M126.5,1061 H154.5" stroke="#555" stroke-width="1.6"/><rect x="142.5" y="1042" width="12" height="8" fill="#2a5a80"/>
<path d="M120,1570.5 H151 L160,1579.5 V1621.5 H120 Z" fill="#fafafa" stroke="#444" stroke-width="1.6"/><path d="M151,1570.5 V1579.5 H160" fill="none" stroke="#444" stroke-width="1.2"/><path d="M132,1578.5 H148 M128,1584.5 H153 M126,1590.5 H154" stroke="#1e6ac8" stroke-width="2.2"/><rect x="126" y="1576.5" width="4" height="6" fill="#1e6ac8"/><path d="M126,1596.5 H140 M126,1602.5 H140 M126,1608.5 H154 M126,1614.5 H154" stroke="#555" stroke-width="1.6"/><rect x="142" y="1595.5" width="12" height="8" fill="#2a5a80"/>
<rect x="114.5" y="1110" width="50.5" height="38.5" fill="#f4f4f4" stroke="#555" stroke-width="1.5"/>
<rect x="118.5" y="1114" width="42.5" height="30.5" fill="url(#sky)"/>
<path d="M118.5,1130 Q130,1124 145,1134 L160.5,1138 V1144.5 H118.5 Z" fill="#3d8a55"/>
<rect x="118.5" y="1138" width="42.5" height="6.5" fill="#4a7cc0"/>
<path d="M119.4,1193 H150 V1230 H154 V1239 H128 V1242.5 L119.4,1237 Z" fill="#f0c85c"/>
<path d="M119.4,1193 L128,1198 V1242.5 L119.4,1237 Z" fill="#fce6a0"/>
<path d="M103.1,1312.2 L139.1,1323 V1346.8 L103.1,1335.3 Z" fill="#40a8f0" stroke="#1a2a3a" stroke-width="1.8"/>
<path d="M111,1345.4 Q122,1352 133.4,1349.7" stroke="#9aa0a8" stroke-width="2.5" fill="none"/>
<path d="M82.9,1350.4 L93,1345.8 L124.7,1354 L116,1361.2 Z" fill="#dcdfe3" stroke="#b8bcc2" stroke-width="0.8"/>
<path d="M140.6,1394.4 L165.8,1403 L140.6,1411 L113.2,1403 Z" fill="#5fcfe8"/>
<path d="M113.2,1403 L140.6,1411 V1429 L113.2,1438.3 Z" fill="#c9eef5"/>
<path d="M165.8,1403 V1438.3 L140.6,1429 V1411 Z" fill="#14a6d6"/>
<path d="M113.2,1438.3 L140.6,1429 L165.8,1438.3 L140.6,1446.3 Z" fill="#22b6d8"/>
<path d="M140.6,1429 L165.8,1438.3 L140.6,1446.3 Z" fill="#0b7fa8"/>
<path d="M130,1658.5 H150.8 V1683 H164.5 L139.4,1708 L114,1683 H130 Z" fill="#3a8de0"/>
<path d="M137,1744 H142 Q152,1750 153.5,1767 H146 Q145,1758 142,1755 V1767 H137 Z" fill="#1a9af0"/>
<rect x="1114.6" y="814" width="88.4" height="124" fill="url(#fback)"/><path d="M1144.3,938 H1180.6 L1144.6,961 Z" fill="#f4f4f4"/><path d="M1114.6,814 L1146.6999999999998,840 L1144.3,961.5 L1114.6,939.6 Z" fill="url(#fflap)"/>
<rect x="1156" y="882" width="92.8" height="65.8" fill="url(#blue1)"/>
<rect x="1943.5" y="814" width="88.4" height="124" fill="url(#fback)"/><path d="M1973.2,938 H2009.5 L1973.5,961 Z" fill="#f4f4f4"/><path d="M1943.5,814 L1975.6,840 L1973.2,961.5 L1943.5,939.6 Z" fill="url(#fflap)"/>
<path d="M2018,865 H2049.3 V906.7 H2073.5 L2033.5,948.3 L1993,906.7 H2018 Z" fill="#3a93e6"/>
<rect x="2773" y="814" width="88.4" height="124" fill="url(#fback)"/>
<path d="M2819,847 H2873 L2896,868 V947 H2819 Z" fill="#f6f7f9" stroke="#b8bcc4" stroke-width="1"/>
<path d="M2873,847 V868 H2896" fill="#e6e8ec" stroke="#b8bcc4" stroke-width="1"/>
<text x="2826" y="874" font-family="Liberation Serif" font-style="italic" font-size="30" fill="#2a6ad0">A</text>
<path d="M2853,857 H2872 M2853,866 H2872 M2849,874 H2895" stroke="#8aa0c8" stroke-width="1.6"/>
<path d="M2826,885 H2895" stroke="#3a7ad8" stroke-width="1.8"/>
<line x1="2826" y1="897" x2="2862" y2="897" stroke="#c8ccd2" stroke-width="1.5"/>
<line x1="2826" y1="907" x2="2862" y2="907" stroke="#c8ccd2" stroke-width="1.5"/>
<line x1="2826" y1="917" x2="2862" y2="917" stroke="#c8ccd2" stroke-width="1.5"/>
<line x1="2826" y1="927" x2="2890" y2="927" stroke="#c8ccd2" stroke-width="1.5"/>
<line x1="2826" y1="937" x2="2890" y2="937" stroke="#c8ccd2" stroke-width="1.5"/>
<rect x="2866" y="893" width="24" height="19" fill="#3a78b8"/><path d="M2866,905 Q2878,900 2890,906 V912 H2866 Z" fill="#9ac8e8"/>
<path d="M2773,814 L2805.1,840 L2802.7,961.5 L2773,939.6 Z" fill="url(#fflap)"/>
<rect x="1114.6" y="1052.5" width="88.4" height="124" fill="url(#fback)"/><path d="M1144.3,1176.5 H1180.6 L1144.6,1199.5 Z" fill="#f4f4f4"/><path d="M1114.6,1052.5 L1146.6999999999998,1078.5 L1144.3,1200.0 L1114.6,1178.1 Z" fill="url(#fflap)"/>
<rect x="1157.2" y="1119" width="90.8" height="67.5" fill="#fbfbfb" stroke="#d8d8d8" stroke-width="1"/>
<rect x="1159.5" y="1121" width="86" height="63" fill="url(#sky)"/>
<path d="M1159.5,1140 Q1170,1130 1180,1137 Q1192,1132 1200,1140 Q1215,1136 1222,1143 Q1235,1138 1245.5,1142 V1165 H1159.5 Z" fill="#dcecf8"/>
<path d="M1159.5,1145 Q1175,1140 1190,1150 Q1205,1160 1245.5,1167 V1170 H1159.5 Z" fill="#3f8a55"/>
<path d="M1195,1160 Q1215,1154 1235,1162 L1245.5,1167 Z" fill="#6aa0c8"/>
<rect x="1159.5" y="1168" width="86" height="16" fill="#4f7fb8"/>
<circle cx="2018.7" cy="1101.3" r="57" fill="url(#globe)"/>
<path d="M1996,1050 Q2008,1044 2020,1047 Q2024,1056 2016,1066 Q2008,1060 2004,1070 Q1994,1066 1996,1050 Z" fill="#d6e6ef"/>
<path d="M2036,1046 Q2050,1048 2062,1060 Q2066,1070 2058,1072 Q2052,1064 2046,1068 Q2040,1060 2036,1046 Z" fill="#d6e6ef"/>
<path d="M2052,1078 Q2064,1070 2072,1076 Q2078,1092 2074,1104 Q2068,1110 2062,1100 Q2054,1092 2052,1078 Z" fill="#dce9f1"/>
<path d="M1965,1082 Q1974,1074 1984,1078 Q1990,1090 1992,1100 Q1982,1098 1974,1094 Q1966,1092 1965,1082 Z" fill="#d6e6ef"/>
<circle cx="2007" cy="1048" r="3" fill="#fff"/><circle cx="2012" cy="1060" r="2.5" fill="#fff"/>
<path d="M1929.6,1087.5 L2030.8,1118.3 V1185.5 L1929.6,1154 Z" fill="url(#scr)" stroke="#1e1e1e" stroke-width="1.6"/><line x1="2031.5" y1="1119" x2="2031.5" y2="1185" stroke="#b08a70" stroke-width="1.5"/>
<path d="M1951.5,1182.3 L1976.6,1173.4 L2015.5,1188 L1995.2,1195.3 Z" fill="#dadde1" stroke="#9a9ea4" stroke-width="1"/><path d="M1951.5,1183 L1995.2,1196 L2015.5,1188.5" fill="none" stroke="#2a2a2a" stroke-width="2"/>
<line x1="1994" y1="1175" x2="1995" y2="1185" stroke="#666" stroke-width="1"/>
<path d="M2793.9,1052.5 L2904,1087 V1159 L2793.9,1121.4 Z" fill="url(#scr)" stroke="#1e1e1e" stroke-width="2.5"/>
<path d="M2818.8,1156 L2848,1148 L2888,1160 L2860,1170 Z" fill="#d4d8dc" stroke="#555" stroke-width="1"/>
<path d="M2754.3,1166 L2785,1152.3 L2878,1180 L2850.5,1195.8 Z" fill="#e8eaec" stroke="#888" stroke-width="1.3"/>
<path d="M2770,1165 L2862,1190 M2780,1160 L2870,1185" stroke="#a0a4a8" stroke-width="2" stroke-dasharray="3 2"/>
<path d="M1103,1302.4 L1160.5,1283.8 L1237.8,1309.7 L1177.5,1330 Z" fill="#e2e3e5"/>
<path d="M1103,1302.4 L1160.5,1283.8 V1351 L1116,1370 Z" fill="#f2f2f3"/>
<path d="M1160.5,1283.8 L1237.8,1309.7 L1228,1380 L1160.5,1351 Z" fill="#e6e7e9"/>
<path d="M1116.7,1412.6 L1167.8,1398 L1222.9,1416.6 L1177.5,1432 Z" fill="#a9abae"/>
<path d="M1116.7,1412.6 L1177.5,1432 L1222.9,1416.6 L1222,1420 L1177.5,1435 L1116,1415 Z" fill="#6e7073"/>
<path d="M1103,1302.4 L1177.5,1330 V1432 L1116,1413.4 Z" fill="#f4f4f5" opacity="0.55"/>
<path d="M1177.5,1330 L1237.8,1309.7 L1222.9,1418.2 L1177.5,1432 Z" fill="#cfd1d4" opacity="0.7"/>
<path d="M1103,1302.4 L1160.5,1283.8 L1237.8,1309.7 L1177.5,1330 Z" fill="none" stroke="#d0d0d2" stroke-width="1"/>
<g fill="#1a7ad8">
<path d="M1128,1340 L1148,1344 L1152,1350 L1158,1346 L1161,1362 L1147,1364 L1150,1358 L1146,1352 L1137,1349 Z"/>
<path d="M1118,1356 L1126,1348 L1134,1356 L1128,1362 L1136,1378 L1140,1372 L1146,1388 L1130,1386 L1133,1382 L1123,1372 Z"/>
<path d="M1142,1376 L1160,1368 L1168,1372 L1164,1386 L1150,1394 L1145,1389 L1154,1384 L1156,1378 L1148,1382 Z"/>
</g>
<rect x="1943.5" y="1291" width="88.4" height="40" fill="url(#fback)"/>
<path d="M1964.6,1299 L2054.5,1309.5 V1428 L1974,1440 Z" fill="#fafafa" stroke="#b8b8b8" stroke-width="1"/>
<path d="M2022,1322 V1440 M1974,1322 Q2010,1326 2054,1325 M1976,1350 Q2020,1355 2030,1355 M1976,1410 Q2020,1412 2054,1412" stroke="#c4c4c4" stroke-width="1.2" fill="none"/>
<path d="M1975,1338 L2005,1346 V1410 L1975,1398 Z" fill="#fff" stroke="#555" stroke-width="1.3"/>
<path d="M1983,1350 V1390 M1990,1352 V1392" stroke="#667" stroke-width="2" stroke-dasharray="4 3"/>
<path d="M1995,1382 Q2020,1368 2046,1370" stroke="#777" stroke-width="1.3" fill="none"/>
<rect x="2022" y="1386" width="5" height="6" fill="#555"/>
<path d="M1943.5,1291 L1975.6,1317 L1973.2,1438.5 L1943.5,1416.6 Z" fill="url(#fflap)"/>
<rect x="2773" y="1291" width="88.4" height="40" fill="url(#fback)"/>
<path d="M2794.6,1298.4 L2882.9,1309.7 V1430.4 L2852.9,1429.6 Z" fill="#13244f"/>
<path d="M2783.2,1298.4 L2852.9,1321.8 V1440 L2803.5,1429.6 Z" fill="#0f1d45" stroke="#3a4a70" stroke-width="0.8"/>
<path d="M2808,1365 H2840 M2808,1377 H2838 M2855,1376 H2868" stroke="#c8d0e0" stroke-width="3" stroke-dasharray="4 2"/>
<path d="M2773,1291 L2805.1,1317 L2802.7,1438.5 L2773,1416.6 Z" fill="url(#fflap)"/>
<rect x="1114.6" y="1530" width="88.4" height="40" fill="url(#fback)"/>
<path d="M1135.4,1537.5 L1223.7,1548.9 V1669.6 L1192.4,1666.3 Z" fill="#f6f6f6"/>
<path d="M1135.4,1537.5 L1223.7,1548.9 V1556 L1160,1548 Z" fill="#111"/>
<path d="M1192.4,1652 L1223.7,1658 V1669.6 L1192.4,1666.3 Z" fill="#111"/>
<path d="M1124,1536.7 L1192.4,1561 V1678.5 L1144.3,1668.8 Z" fill="#1c2230"/>
<path d="M1146,1580 L1192.4,1592 V1598 L1146,1586 Z" fill="#a8c4f0"/>
<path d="M1146,1588 L1192.4,1600 V1606 L1146,1594 Z" fill="#e07050"/>
<path d="M1148,1598 L1192.4,1610 V1630 L1148,1618 Z" fill="#f0ecc0"/>
<path d="M1114.6,1530 L1146.6999999999998,1556 L1144.3,1677.5 L1114.6,1655.6 Z" fill="url(#fflap)"/>
<rect x="1943.5" y="1530" width="88.4" height="124" fill="url(#fback)"/><path d="M1973.2,1654 H2009.5 L1973.5,1677 Z" fill="#f4f4f4"/><path d="M1943.5,1530 L1975.6,1556 L1973.2,1677.5 L1943.5,1655.6 Z" fill="url(#fflap)"/>
<rect x="1985" y="1568.8" width="85" height="95.1" fill="#1a1a1a"/>
<rect x="1995" y="1572" width="65" height="43" fill="#3a8ae0"/><rect x="1995" y="1618" width="65" height="43" fill="#3a8ae0"/>
<ellipse cx="2038" cy="1588" rx="10" ry="12" fill="#f0b020" stroke="#222" stroke-width="2"/>
<path d="M1995,1600 Q2010,1585 2020,1604 V1615 H1995 Z" fill="#e05030"/>
<path d="M2020,1606 Q2040,1598 2060,1606 V1615 H2020 Z" fill="#3a9a40"/>
<ellipse cx="2030" cy="1628" rx="8" ry="9" fill="#e08020"/>
<ellipse cx="2040" cy="1655" rx="10" ry="8" fill="#f0b020" stroke="#222" stroke-width="2"/>
<rect x="1987.5" y="1572.0" width="5" height="6" fill="#f4f4f4"/><rect x="2062.5" y="1572.0" width="5" height="6" fill="#f4f4f4"/>
<rect x="1987.5" y="1583.5" width="5" height="6" fill="#f4f4f4"/><rect x="2062.5" y="1583.5" width="5" height="6" fill="#f4f4f4"/>
<rect x="1987.5" y="1595.0" width="5" height="6" fill="#f4f4f4"/><rect x="2062.5" y="1595.0" width="5" height="6" fill="#f4f4f4"/>
<rect x="1987.5" y="1606.5" width="5" height="6" fill="#f4f4f4"/><rect x="2062.5" y="1606.5" width="5" height="6" fill="#f4f4f4"/>
<rect x="1987.5" y="1618.0" width="5" height="6" fill="#f4f4f4"/><rect x="2062.5" y="1618.0" width="5" height="6" fill="#f4f4f4"/>
<rect x="1987.5" y="1629.5" width="5" height="6" fill="#f4f4f4"/><rect x="2062.5" y="1629.5" width="5" height="6" fill="#f4f4f4"/>
<rect x="1987.5" y="1641.0" width="5" height="6" fill="#f4f4f4"/><rect x="2062.5" y="1641.0" width="5" height="6" fill="#f4f4f4"/>
<rect x="1987.5" y="1652.5" width="5" height="6" fill="#f4f4f4"/><rect x="2062.5" y="1652.5" width="5" height="6" fill="#f4f4f4"/>
<g transform="translate(1279,925) scale(0.49)">
<path d="M51,0 L75,24.8 L72.6,28.1 L64.7,30.4 L53.5,43.9 L49.6,55.1 L42.3,67.5 L28.2,55.7 L20.9,48.4 L7.4,33.2 L23.1,26.5 L34.4,25.9 L44.5,13.5 L44.5,10.1 Z" fill="#8c9aa6"/><line x1="24" y1="52" x2="4" y2="71" stroke="#8c9aa6" stroke-width="8" stroke-linecap="round"/>
</g>
<g transform="translate(2109,925) scale(0.49)">
<path d="M51,0 L75,24.8 L72.6,28.1 L64.7,30.4 L53.5,43.9 L49.6,55.1 L42.3,67.5 L28.2,55.7 L20.9,48.4 L7.4,33.2 L23.1,26.5 L34.4,25.9 L44.5,13.5 L44.5,10.1 Z" fill="#8c9aa6"/><line x1="24" y1="52" x2="4" y2="71" stroke="#8c9aa6" stroke-width="8" stroke-linecap="round"/>
</g>
<g transform="translate(2939,925) scale(0.49)">
<path d="M51,0 L75,24.8 L72.6,28.1 L64.7,30.4 L53.5,43.9 L49.6,55.1 L42.3,67.5 L28.2,55.7 L20.9,48.4 L7.4,33.2 L23.1,26.5 L34.4,25.9 L44.5,13.5 L44.5,10.1 Z" fill="#8c9aa6"/><line x1="24" y1="52" x2="4" y2="71" stroke="#8c9aa6" stroke-width="8" stroke-linecap="round"/>
</g>
<g transform="translate(1279,1163) scale(0.49)">
<path d="M51,0 L75,24.8 L72.6,28.1 L64.7,30.4 L53.5,43.9 L49.6,55.1 L42.3,67.5 L28.2,55.7 L20.9,48.4 L7.4,33.2 L23.1,26.5 L34.4,25.9 L44.5,13.5 L44.5,10.1 Z" fill="#8c9aa6"/><line x1="24" y1="52" x2="4" y2="71" stroke="#8c9aa6" stroke-width="8" stroke-linecap="round"/>
</g>
<g transform="translate(2109,1163) scale(0.49)">
<path d="M51,0 L75,24.8 L72.6,28.1 L64.7,30.4 L53.5,43.9 L49.6,55.1 L42.3,67.5 L28.2,55.7 L20.9,48.4 L7.4,33.2 L23.1,26.5 L34.4,25.9 L44.5,13.5 L44.5,10.1 Z" fill="#8c9aa6"/><line x1="24" y1="52" x2="4" y2="71" stroke="#8c9aa6" stroke-width="8" stroke-linecap="round"/>
</g>
<g transform="translate(2939,1163) scale(0.49)">
<path d="M51,0 L75,24.8 L72.6,28.1 L64.7,30.4 L53.5,43.9 L49.6,55.1 L42.3,67.5 L28.2,55.7 L20.9,48.4 L7.4,33.2 L23.1,26.5 L34.4,25.9 L44.5,13.5 L44.5,10.1 Z" fill="#8c9aa6"/><line x1="24" y1="52" x2="4" y2="71" stroke="#8c9aa6" stroke-width="8" stroke-linecap="round"/>
</g>
<g transform="translate(1279,1402) scale(0.49)">
<path d="M51,0 L75,24.8 L72.6,28.1 L64.7,30.4 L53.5,43.9 L49.6,55.1 L42.3,67.5 L28.2,55.7 L20.9,48.4 L7.4,33.2 L23.1,26.5 L34.4,25.9 L44.5,13.5 L44.5,10.1 Z" fill="#8c9aa6"/><line x1="24" y1="52" x2="4" y2="71" stroke="#8c9aa6" stroke-width="8" stroke-linecap="round"/>
</g></svg>
</body></html>
